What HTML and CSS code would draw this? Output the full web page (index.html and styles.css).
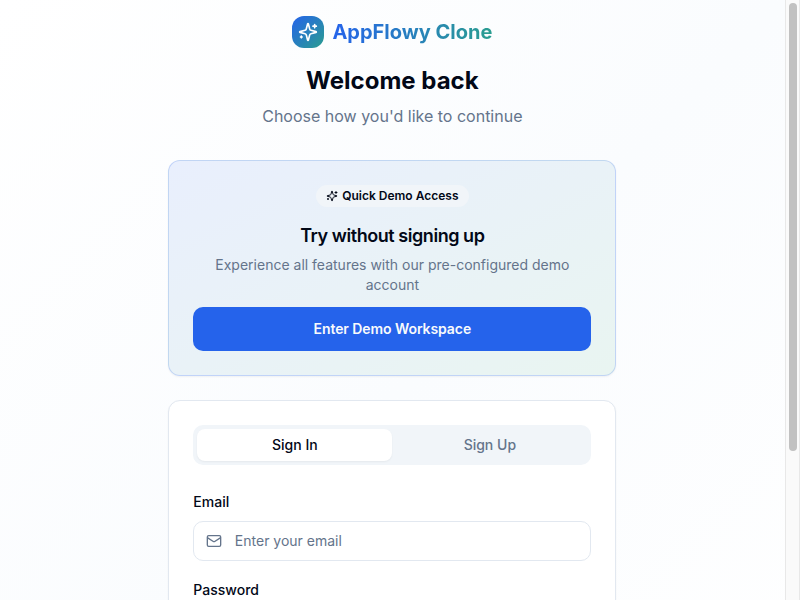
FILE: index.html
```html
<!DOCTYPE html>
<html lang="en">
<head>
<meta charset="utf-8">
<title>AppFlowy Clone</title>
<link rel="stylesheet" href="styles.css">
</head>
<body>
<svg class="defs" aria-hidden="true">
  <symbol id="sparkles" viewBox="0 0 24 24">
    <path d="M9.937 15.5A2 2 0 0 0 8.5 14.063l-6.135-1.582a.5.5 0 0 1 0-.962L8.5 9.936A2 2 0 0 0 9.937 8.5l1.582-6.135a.5.5 0 0 1 .963 0L14.063 8.5A2 2 0 0 0 15.5 9.937l6.135 1.581a.5.5 0 0 1 0 .964L15.5 14.063a2 2 0 0 0-1.437 1.437l-1.582 6.135a.5.5 0 0 1-.963 0z"/>
    <path d="M20 3v4M22 5h-4M4 17v2M5 18H3"/>
  </symbol>
</svg>
<div class="viewport">
  <main class="page">
    <div class="column">
      <header class="header">
        <div class="brand">
          <span class="logo"><svg class="icon"><use href="#sparkles"/></svg></span>
          <span class="brand-name">AppFlowy Clone</span>
        </div>
        <h1>Welcome back</h1>
        <p>Choose how you'd like to continue</p>
      </header>
      <section class="card demo">
        <span class="badge"><svg class="icon"><use href="#sparkles"/></svg>Quick Demo Access</span>
        <h2>Try without signing up</h2>
        <p>Experience all features with our pre-configured demo account</p>
        <button class="primary">Enter Demo Workspace</button>
      </section>
      <section class="card form">
        <div class="tabs">
          <button class="tab active">Sign In</button>
          <button class="tab">Sign Up</button>
        </div>
        <div class="field">
          <label for="email">Email</label>
          <div class="input">
            <svg class="mail" viewBox="0 0 24 24"><rect x="2" y="4" width="20" height="16" rx="2"/><path d="m22 7-8.97 5.7a1.94 1.94 0 0 1-2.06 0L2 7"/></svg>
            <input id="email" type="email" placeholder="Enter your email">
          </div>
        </div>
        <div class="field">
          <label for="password">Password</label>
          <div class="input"><input id="password" type="password"></div>
        </div>
      </section>
    </div>
  </main>
  <div class="scrollbar"><div class="thumb"></div></div>
</div>
</body>
</html>
```
FILE: styles.css
```css
* { box-sizing: border-box; margin: 0; padding: 0; }
body { font-family: Inter, sans-serif; color: #020817; font-size: 14px; line-height: 20px; overflow: hidden; }
button, input { font: inherit; border: 0; background: none; color: inherit; outline: 0; }
.defs { display: none; }
.viewport { display: flex; height: 600px; overflow: hidden; }
.page { flex: 1; height: 800px; padding: 16px .3px 0 0; background: linear-gradient(to bottom right, #fff, #fafcfe 50%, #fff); }
.column { width: 448px; margin: 0 auto; }
.header { text-align: center; margin-bottom: 32px; }
.brand { display: flex; align-items: center; justify-content: center; gap: 8px; height: 32px; margin-bottom: 17px; }
.logo { display: flex; align-items: center; justify-content: center; width: 32px; height: 32px; border-radius: 12px; color: #fff; background: linear-gradient(to bottom right, #2563eb, #2a9d90); }
.icon { width: 20px; height: 20px; fill: none; stroke: currentColor; stroke-width: 2; stroke-linecap: round; stroke-linejoin: round; }
.brand-name { font-size: 20px; line-height: 28px; font-weight: 700; color: transparent; background: linear-gradient(to right, #2563eb, #2a9d90); -webkit-background-clip: text; background-clip: text; }
h1 { font-size: 24px; line-height: 32px; font-weight: 700; margin-bottom: 7px; }
p { color: #64748b; }
.header p { font-size: 16px; line-height: 24px; }
.card { border: 1px solid #e2e8f0; border-radius: 12px; padding: 24px; box-shadow: 0 1px 2px rgba(0,0,0,.05); background: #fff; }
.demo { height: 216px; text-align: center; display: flex; flex-direction: column; align-items: center; border-color: rgba(37,99,235,.2); background: linear-gradient(to bottom right, #e9effd, #e9f5f1); }
.badge { display: flex; align-items: center; gap: 4px; height: 22px; padding: 0 10px; border-radius: 11px; background: #f1f5f9; font-size: 12px; line-height: 16px; font-weight: 600; margin-bottom: 15px; }
.badge .icon { width: 12px; height: 12px; }
h2 { font-size: 18px; line-height: 28px; font-weight: 600; letter-spacing: -.45px; margin-bottom: 5px; }
.primary { width: 100%; height: 44px; margin-top: 12px; border-radius: 10px; background: #2563eb; color: #f8fafc; font-weight: 600; letter-spacing: -.08px; }
.form { margin-top: 24px; height: 420px; }
.tabs { display: grid; grid-template-columns: 1fr 1fr; height: 40px; padding: 4px; border-radius: 10px; background: #f1f5f9; margin-bottom: 24px; }
.tab { border-radius: 8px; font-weight: 500; color: #64748b; }
.tab.active { background: #fff; color: #020817; box-shadow: 0 1px 2px rgba(0,0,0,.05); }
.field { margin-bottom: 16px; }
.field label { display: block; height: 24px; line-height: 26px; font-weight: 500; margin-bottom: 8px; }
.input { display: flex; align-items: center; gap: 13px; height: 40px; padding: 0 12px 0 11.5px; border: 1px solid #e2e8f0; border-radius: 10px; background: #fff; }
.input input { flex: 1; min-width: 0; }
.input input::placeholder { color: #64748b; opacity: 1; }
.mail { width: 16px; height: 16px; fill: none; stroke: #64748b; stroke-width: 2; }
.scrollbar { width: 15px; height: 600px; padding: 3px 2px 0 3px; background: #fafafa; border: solid #e8e8e8; border-width: 0 1px; }
.thumb { width: 8px; height: 448px; border-radius: 4px; background: #c1c1c1; }
```
